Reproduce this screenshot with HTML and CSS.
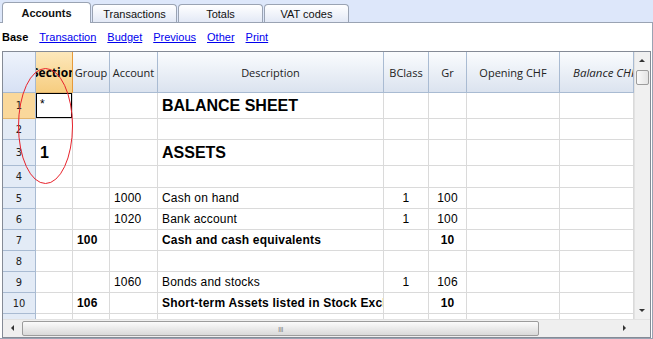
FILE: index.html
```html
<!DOCTYPE html>
<html lang="en">
<head>
    <meta charset="UTF-8">
    <title>Accounts</title>
    <link rel="stylesheet" href="styles.css">
</head>
<body>

    <div class="tabs">
        <div class="tab active">Accounts</div>
        <div class="tab">Transactions</div>
        <div class="tab">Totals</div>
        <div class="tab">VAT codes</div>
    </div>

    <div class="panel">
        <!-- views -->
        <div class="views">
            <b>Base</b>
            <a href="#">Transaction</a>
            <a href="#">Budget</a>
            <a href="#">Previous</a>
            <a href="#">Other</a>
            <a href="#">Print</a>
        </div>

        <div class="grid">
            <div class="grid-body">
                <div class="sheet">
                    <div class="row head">
                        <div class="corner-cell"></div>
                        <div class="hd on"><span>Section</span></div>
                        <div class="hd">Group</div>
                        <div class="hd">Account</div>
                        <div class="hd">Description</div>
                        <div class="hd">BClass</div>
                        <div class="hd">Gr</div>
                        <div class="hd">Opening CHF</div>
                        <div class="hd it">Balance CHF</div>
                    </div>
                    <div class="row tall">
                        <div class="rh on">1</div>
                        <div class="c sel star">*</div>
                        <div class="c"></div>
                        <div class="c"></div>
                        <div class="c big">BALANCE SHEET</div>
                        <div class="c"></div>
                        <div class="c"></div>
                        <div class="c"></div>
                        <div class="c"></div>
                    </div>
                    <div class="row">
                        <div class="rh">2</div>
                        <div class="c"></div>
                        <div class="c"></div>
                        <div class="c"></div>
                        <div class="c"></div>
                        <div class="c"></div>
                        <div class="c"></div>
                        <div class="c"></div>
                        <div class="c"></div>
                    </div>
                    <div class="row tall">
                        <div class="rh">3</div>
                        <div class="c big">1</div>
                        <div class="c"></div>
                        <div class="c"></div>
                        <div class="c big">ASSETS</div>
                        <div class="c"></div>
                        <div class="c"></div>
                        <div class="c"></div>
                        <div class="c"></div>
                    </div>
                    <div class="row r4">
                        <div class="rh">4</div>
                        <div class="c"></div>
                        <div class="c"></div>
                        <div class="c"></div>
                        <div class="c"></div>
                        <div class="c"></div>
                        <div class="c"></div>
                        <div class="c"></div>
                        <div class="c"></div>
                    </div>
                    <div class="row">
                        <div class="rh">5</div>
                        <div class="c"></div>
                        <div class="c"></div>
                        <div class="c">1000</div>
                        <div class="c">Cash on hand</div>
                        <div class="c num">1</div>
                        <div class="c num">100</div>
                        <div class="c"></div>
                        <div class="c"></div>
                    </div>
                    <div class="row">
                        <div class="rh">6</div>
                        <div class="c"></div>
                        <div class="c"></div>
                        <div class="c">1020</div>
                        <div class="c">Bank account</div>
                        <div class="c num">1</div>
                        <div class="c num">100</div>
                        <div class="c"></div>
                        <div class="c"></div>
                    </div>
                    <div class="row">
                        <div class="rh">7</div>
                        <div class="c"></div>
                        <div class="c b">100</div>
                        <div class="c"></div>
                        <div class="c b">Cash and cash equivalents</div>
                        <div class="c"></div>
                        <div class="c num b">10</div>
                        <div class="c"></div>
                        <div class="c"></div>
                    </div>
                    <div class="row">
                        <div class="rh">8</div>
                        <div class="c"></div>
                        <div class="c"></div>
                        <div class="c"></div>
                        <div class="c"></div>
                        <div class="c"></div>
                        <div class="c"></div>
                        <div class="c"></div>
                        <div class="c"></div>
                    </div>
                    <div class="row">
                        <div class="rh">9</div>
                        <div class="c"></div>
                        <div class="c"></div>
                        <div class="c">1060</div>
                        <div class="c">Bonds and stocks</div>
                        <div class="c num">1</div>
                        <div class="c num">106</div>
                        <div class="c"></div>
                        <div class="c"></div>
                    </div>
                    <div class="row">
                        <div class="rh">10</div>
                        <div class="c"></div>
                        <div class="c b">106</div>
                        <div class="c"></div>
                        <div class="c b">Short-term Assets listed in Stock Exchange</div>
                        <div class="c"></div>
                        <div class="c num b">10</div>
                        <div class="c"></div>
                        <div class="c"></div>
                    </div>
                    <div class="row">
                        <div class="rh">11</div>
                        <div class="c"></div>
                        <div class="c"></div>
                        <div class="c"></div>
                        <div class="c"></div>
                        <div class="c"></div>
                        <div class="c"></div>
                        <div class="c"></div>
                        <div class="c"></div>
                    </div>
                </div>

                <div class="vscroll">
                    <span class="arrow up"></span>
                    <div class="vthumb"></div>
                    <span class="arrow down"></span>
                </div>
            </div>

            <div class="hbar">
                <div class="hscroll">
                    <span class="arrow left"></span>
                    <div class="hthumb"><span class="grip">III</span></div>
                    <span class="arrow right"></span>
                </div>
                <div class="corner"></div>
            </div>
        </div>
    </div>

    <!-- red mark round the Section column -->
    <svg class="mark" width="57" height="118" viewBox="0 0 57 118">
        <ellipse cx="28.5" cy="59" rx="27" ry="57.5" fill="none" stroke="#e8232c" stroke-width="1"/>
    </svg>

</body>
</html>
```

FILE: styles.css
```css
/* Accounts grid */
* {
    box-sizing: border-box;
}

body {
    margin: 0;
    width: 653px;
    height: 339px;
    overflow: hidden;
    background-color: #dde7fa;
    font-family: 'Liberation Sans', Arial, sans-serif;
    font-size: 11px;
    color: #000;
}

/* tabs */
.tabs {
    display: flex;
    align-items: flex-end;
    gap: 1px;
    height: 22px;
    padding-left: 2px;
}

.tab {
    width: 85px;
    height: 18px;
    border: 1px solid #9aa3b3;
    border-bottom: none;
    border-radius: 4px 4px 0 0;
    background: linear-gradient(#ffffff, #e3e9f6);
    text-align: center;
    line-height: 18px;
    color: #111;
}

.tab.active {
    position: relative;
    z-index: 1;
    width: 89px;
    height: 21px;
    margin-bottom: -1px;
    background: #fff;
    font-weight: bold;
    line-height: 21px;
}

/* panel */
.panel {
    height: 317px;
    background-color: #fff;
    border-top: 1px solid #9aa3b3;
    border-right: 1px solid #9aa3b3;
    border-bottom: 1px solid #9aa3b3;
}

.views {
    display: flex;
    align-items: center;
    gap: 11px;
    height: 28px;
    padding-left: 2px;
}

.views a {
    color: #0000ee;
}

/* grid */
.grid {
    display: flex;
    flex-direction: column;
    width: 649px;
    height: 287px;
    margin-left: 2px;
    border: 1px solid #858b96;
}

.grid-body {
    display: flex;
    height: 267px;
}

.sheet {
    width: 631px;
    overflow: hidden;
}

.row {
    display: grid;
    grid-template-columns: 33px 37px 37px 48px 226px 45px 38px 93px 74px;
    height: 21px;
}

.row.head {
    height: 41px;
}

.row.tall {
    height: 26px;
}

.row.r4 {
    height: 22px;
}

.corner-cell {
    background: linear-gradient(#eef3fc, #d7e1f4);
    border-right: 1px solid #a7b9d0;
    border-bottom: 1px solid #a7b9d0;
}

.hd {
    display: flex;
    align-items: center;
    justify-content: center;
    overflow: hidden;
    white-space: nowrap;
    background: linear-gradient(#fafcfe, #dbe3ef);
    border-right: 1px solid #a9bbd2;
    border-bottom: 1px solid #a9bbd2;
    font-family: 'Open Sans', 'DejaVu Sans', sans-serif;
    font-size: 11px;
    color: #222;
}

.hd.on {
    background: linear-gradient(#fde8bb, #f6cd80);
    border-right-color: #e69a3a;
    border-bottom-color: #e3b56d;
    font-weight: bold;
    font-size: 12px;
    color: #000;
}

.hd.it {
    font-style: italic;
    justify-content: flex-start;
    padding-left: 13px;
    font-size: 11.5px;
}

.rh {
    display: flex;
    align-items: center;
    justify-content: center;
    background-color: #e3ebf6;
    border-right: 1px solid #a9bbd2;
    border-bottom: 1px solid #a9bbd2;
    font-family: 'Liberation Sans Narrow', 'DejaVu Sans Condensed', sans-serif;
    font-size: 11px;
    color: #222;
}

.rh.on {
    background-color: #fad89b;
    border-bottom-color: #e3b56d;
}

.c {
    display: flex;
    align-items: center;
    padding: 0 4px;
    overflow: hidden;
    white-space: nowrap;
    border-right: 1px solid #dadada;
    border-bottom: 1px solid #dadada;
    font-size: 12px;
    letter-spacing: 0.2px;
}

.c.num {
    justify-content: center;
}

.c.b {
    font-weight: bold;
}

.c.big {
    font-size: 16px;
    font-weight: bold;
    letter-spacing: 0;
}

.c.sel {
    box-shadow: inset 0 0 0 1px #000;
}

.c.star {
    align-items: flex-start;
    padding-top: 4px;
}

/* scroll bars */
.vscroll {
    position: relative;
    width: 16px;
    background-color: #f0f0f0;
    border-left: 1px solid #e2e2e2;
}

.vthumb {
    position: absolute;
    top: 18px;
    left: 1px;
    width: 13px;
    height: 15px;
    border: 1px solid #9c9c9c;
    border-radius: 2px;
    background: linear-gradient(90deg, #fafafa, #e4e4e4);
}

.arrow {
    position: absolute;
    width: 0;
    height: 0;
    border: 3px solid transparent;
}

.arrow.up {
    top: 4px;
    left: 4px;
    border-bottom: 3px solid #333;
}

.arrow.down {
    bottom: 4px;
    left: 4px;
    border-top: 3px solid #333;
}

.hbar {
    display: flex;
    height: 18px;
}

.hscroll {
    position: relative;
    width: 631px;
    background-color: #efefef;
    border-top: 1px solid #e2e2e2;
}

.hthumb {
    position: absolute;
    top: 1px;
    left: 19px;
    width: 517px;
    height: 15px;
    border: 1px solid #9c9c9c;
    border-radius: 2px;
    background: linear-gradient(#fbfbfb, #d9d9d9);
    text-align: center;
}

.grip {
    font-size: 8px;
    line-height: 13px;
    color: #888;
    letter-spacing: -0.5px;
}

.arrow.left {
    top: 5px;
    left: 5px;
    border-right: 3px solid #333;
}

.arrow.right {
    top: 5px;
    right: 5px;
    border-left: 3px solid #333;
}

.corner {
    width: 16px;
    background-color: #efefef;
    border-top: 1px solid #e2e2e2;
}

.mark {
    position: absolute;
    left: 17px;
    top: 67px;
}
```
